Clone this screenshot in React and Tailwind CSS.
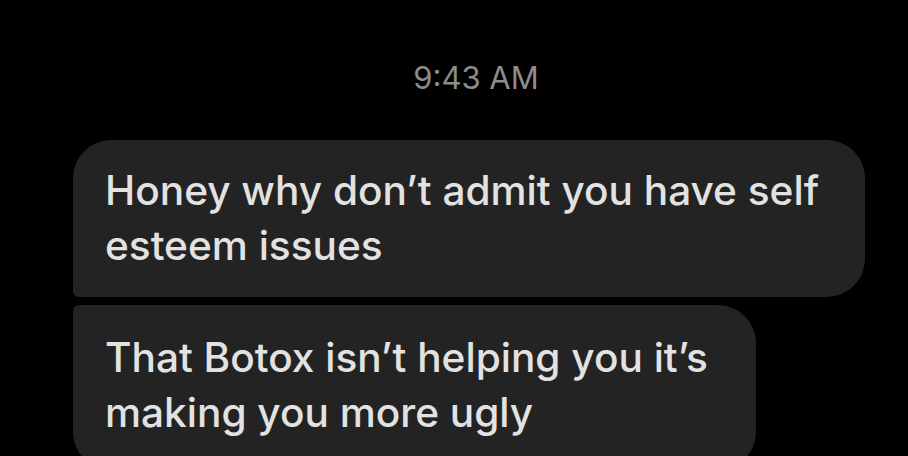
export default function App() {
  return (
    <div className="h-[456px] w-[908px] overflow-hidden bg-black font-['Inter','Liberation_Sans',sans-serif] antialiased">
      <div className="flex justify-center pl-[44px] pt-[56px] text-[31px] leading-[44px] text-[#8c8c8c]">
        9:43 AM
      </div>
      <div className="mt-[40px] flex flex-col gap-[8px] pl-[73px]">
        <div className="w-[792px] rounded-[38px] rounded-bl-[6px] bg-[#232323] pl-[32px] pt-[23px] pb-[24px] text-[40.6px] font-medium leading-[55px] whitespace-nowrap text-[#e2e2e2]">
          Honey why don’t admit you have self
          <br />
          esteem issues
        </div>
        <div className="w-[683px] rounded-[38px] rounded-tl-[6px] bg-[#232323] pl-[32px] pt-[25px] pb-[30px] text-[40.6px] font-medium leading-[55px] whitespace-nowrap text-[#e2e2e2]">
          That Botox isn’t helping you it’s
          <br />
          making you more ugly
        </div>
      </div>
    </div>
  );
}
